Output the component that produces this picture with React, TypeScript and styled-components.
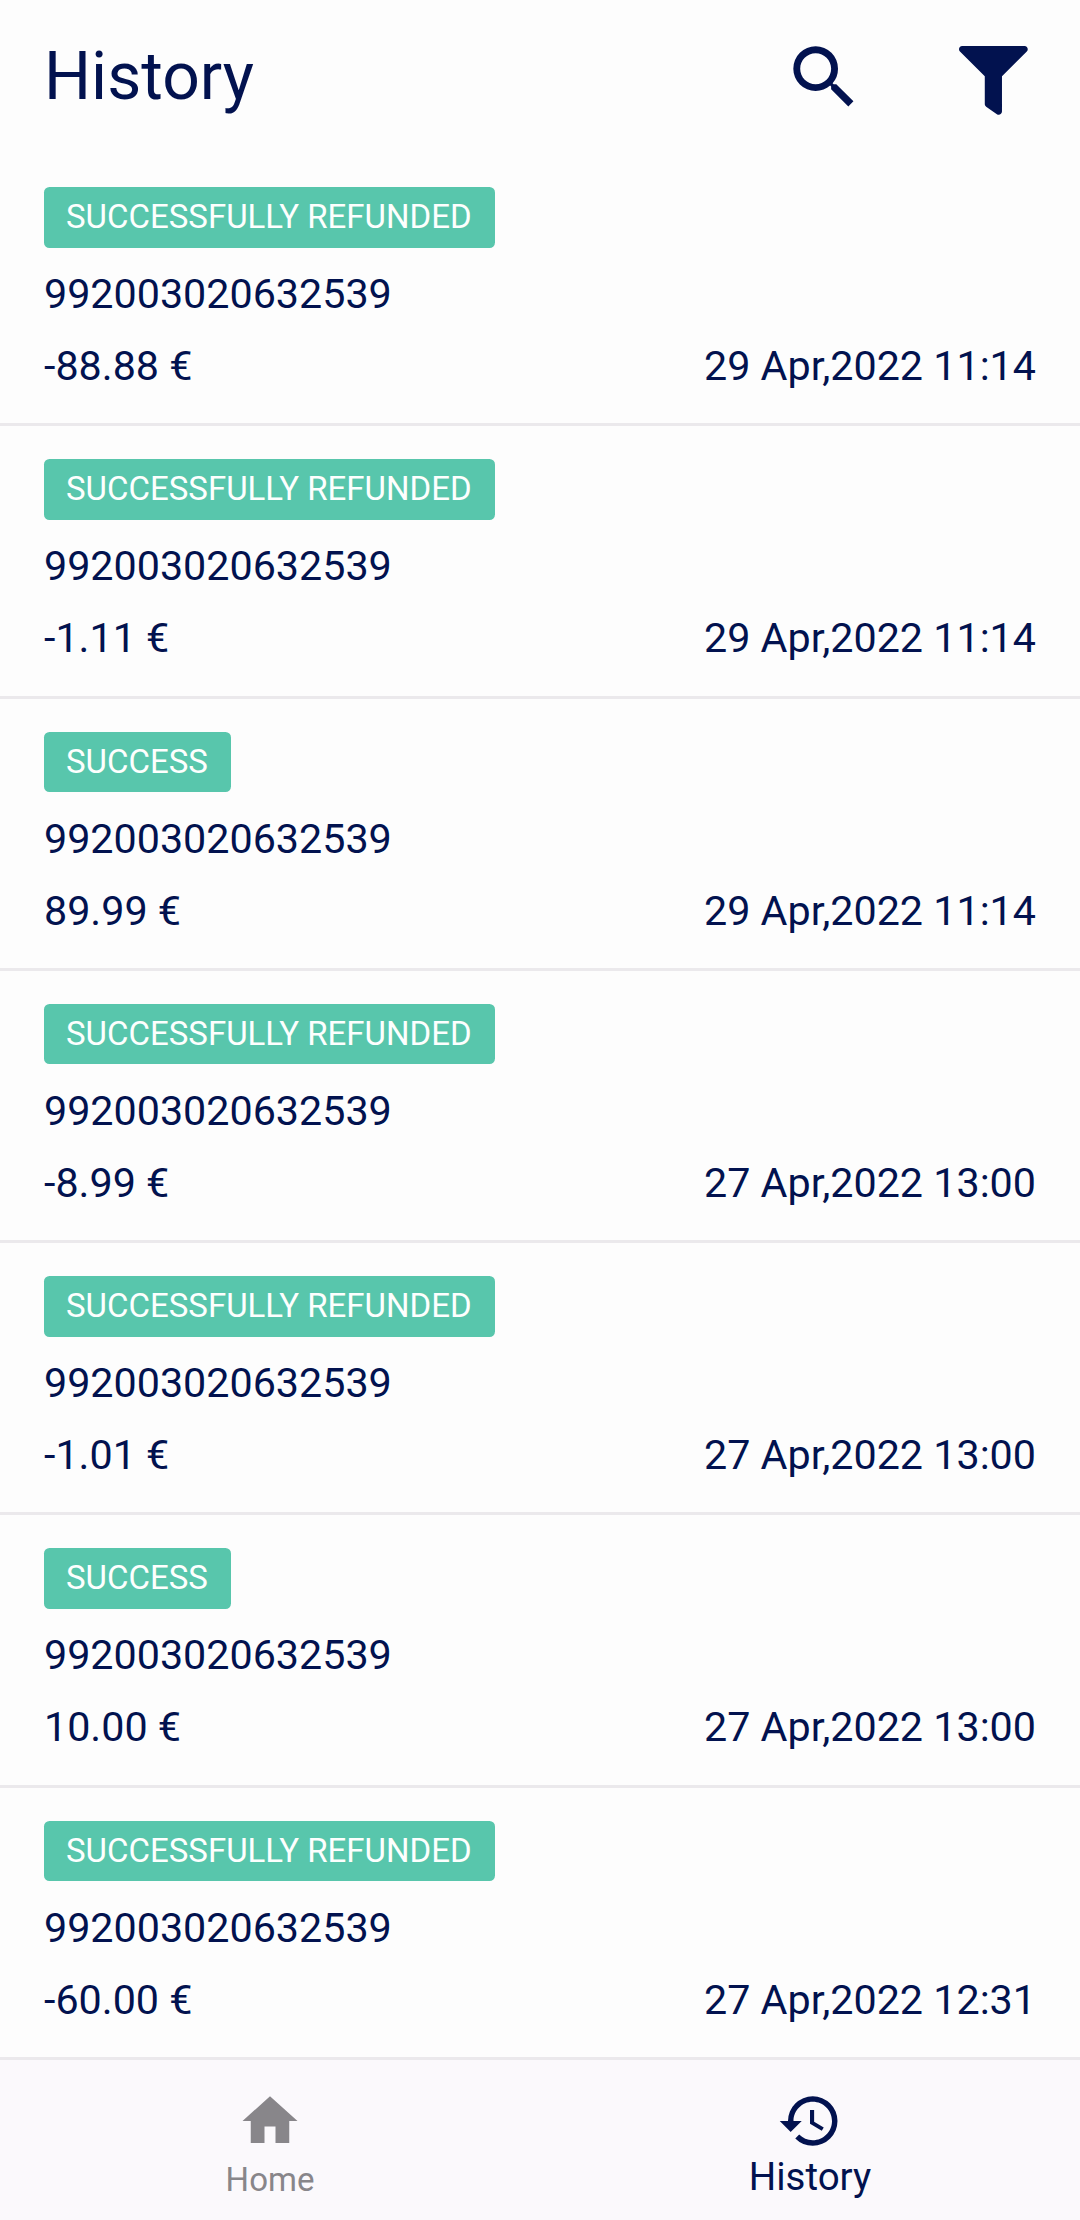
import React from "react";
import styled, { createGlobalStyle } from "styled-components";

const NAVY = "#02124f";
const GREY = "#88868a";

const GlobalStyle = createGlobalStyle`
  * { box-sizing: border-box; }
  body { margin: 0; background: #fdfdfd; }
`;

const Screen = styled.div`
  width: 1080px;
  height: 2220px;
  display: flex;
  flex-direction: column;
  overflow: hidden;
  background: #fdfdfd;
  color: ${NAVY};
  font-family: Roboto, "Noto Sans", sans-serif;
`;

const Header = styled.header`
  height: 154px;
  flex: none;
  display: flex;
  align-items: flex-start;
  justify-content: space-between;
  padding: 36px 52px 0 44px;
`;

const Title = styled.h1`
  margin: 1px 0 0;
  font-size: 66px;
  font-weight: 400;
  line-height: 80px;
`;

const Actions = styled.div`
  display: flex;
  align-items: flex-start;
  gap: 94px;
`;

const IconButton = styled.button<{ $top?: number }>`
  display: flex;
  padding: 0;
  margin-top: ${(p) => p.$top ?? 0}px;
  border: 0;
  background: none;
  color: inherit;
`;

const Icon = styled.svg<{ $size: number }>`
  display: block;
  width: ${(p) => p.$size}px;
  height: ${(p) => p.$size}px;
  fill: currentColor;
`;

const List = styled.main`
  flex: none;
`;

const Row = styled.article`
  height: 272.25px;
  padding: 33px 44px 0;
  border-bottom: 3px solid #ebe9ec;
`;

const Badge = styled.span`
  display: block;
  width: fit-content;
  height: 60.5px;
  padding: 0 23px 0 22px;
  border-radius: 5.5px;
  background: #58c6ac;
  color: #fdfffe;
  font-size: 33px;
  line-height: 59px;
`;

const Reference = styled.div`
  margin-top: 21.5px;
  font-size: 41.25px;
  line-height: 50px;
`;

const Details = styled.div`
  display: flex;
  justify-content: space-between;
  margin-top: 22px;
  font-size: 41.25px;
  line-height: 50px;
`;

const TabBar = styled.nav`
  flex: 1;
  display: flex;
  background: #fbf9fc;
`;

const Tab = styled.a<{ $active?: boolean }>`
  flex: 1;
  display: flex;
  flex-direction: column;
  align-items: center;
  padding-top: 28px;
  color: ${(p) => (p.$active ? NAVY : GREY)};
  font-size: ${(p) => (p.$active ? 38.5 : 33)}px;
  line-height: 46px;
`;

const TabLabel = styled.span<{ $top: number }>`
  margin-top: ${(p) => p.$top}px;
`;

const payments = [
  { status: "SUCCESSFULLY REFUNDED", amount: "-88.88 €", date: "29 Apr,2022 11:14" },
  { status: "SUCCESSFULLY REFUNDED", amount: "-1.11 €", date: "29 Apr,2022 11:14" },
  { status: "SUCCESS", amount: "89.99 €", date: "29 Apr,2022 11:14" },
  { status: "SUCCESSFULLY REFUNDED", amount: "-8.99 €", date: "27 Apr,2022 13:00" },
  { status: "SUCCESSFULLY REFUNDED", amount: "-1.01 €", date: "27 Apr,2022 13:00" },
  { status: "SUCCESS", amount: "10.00 €", date: "27 Apr,2022 13:00" },
  { status: "SUCCESSFULLY REFUNDED", amount: "-60.00 €", date: "27 Apr,2022 12:31" },
];

export default function App() {
  return (
    <>
      <GlobalStyle />
      <Screen>
        <Header>
          <Title>History</Title>
          <Actions>
            <IconButton aria-label="Search">
              <Icon $size={82.5} viewBox="0 0 24 24">
                <path d="M15.5 14h-.79l-.28-.27A6.471 6.471 0 0 0 16 9.5 6.5 6.5 0 1 0 9.5 16c1.61 0 3.09-.59 4.23-1.57l.27.28v.79l5 4.99L20.49 19l-4.99-5zm-6 0C7.01 14 5 11.99 5 9.5S7.01 5 9.5 5 14 7.01 14 9.5 11.99 14 9.5 14z" />
              </Icon>
            </IconButton>
            <IconButton aria-label="Filter" $top={10}>
              <Icon $size={68.75} viewBox="0 0 512 512">
                <path d="M487.976 0H24.028C2.71 0-8.047 25.866 7.058 40.971L192 225.941V432c0 7.831 3.821 15.17 10.237 19.662l80 55.98C298.02 518.69 320 507.493 320 487.98V225.941l184.947-184.97C520.021 25.896 509.338 0 487.976 0z" />
              </Icon>
            </IconButton>
          </Actions>
        </Header>
        <List>
          {payments.map((p, i) => (
            <Row key={i}>
              <Badge>{p.status}</Badge>
              <Reference>992003020632539</Reference>
              <Details>
                <span>{p.amount}</span>
                <span>{p.date}</span>
              </Details>
            </Row>
          ))}
        </List>
        <TabBar>
          <Tab>
            <Icon $size={66} viewBox="0 0 24 24">
              <path d="M10 20v-6h4v6h5v-8h3L12 3 2 12h3v8z" />
            </Icon>
            <TabLabel $top={3}>Home</TabLabel>
          </Tab>
          <Tab $active>
            <Icon $size={66} viewBox="0 0 24 24">
              <path d="M13 3a9 9 0 0 0-9 9H1l3.89 3.89.07.14L9 12H6c0-3.87 3.13-7 7-7s7 3.13 7 7-3.13 7-7 7c-1.93 0-3.68-.79-4.94-2.06l-1.42 1.42A8.954 8.954 0 0 0 13 21a9 9 0 0 0 0-18zm-1 5v5l4.28 2.54.72-1.21-3.5-2.08V8H12z" />
            </Icon>
            <TabLabel $top={0}>History</TabLabel>
          </Tab>
        </TabBar>
      </Screen>
    </>
  );
}
